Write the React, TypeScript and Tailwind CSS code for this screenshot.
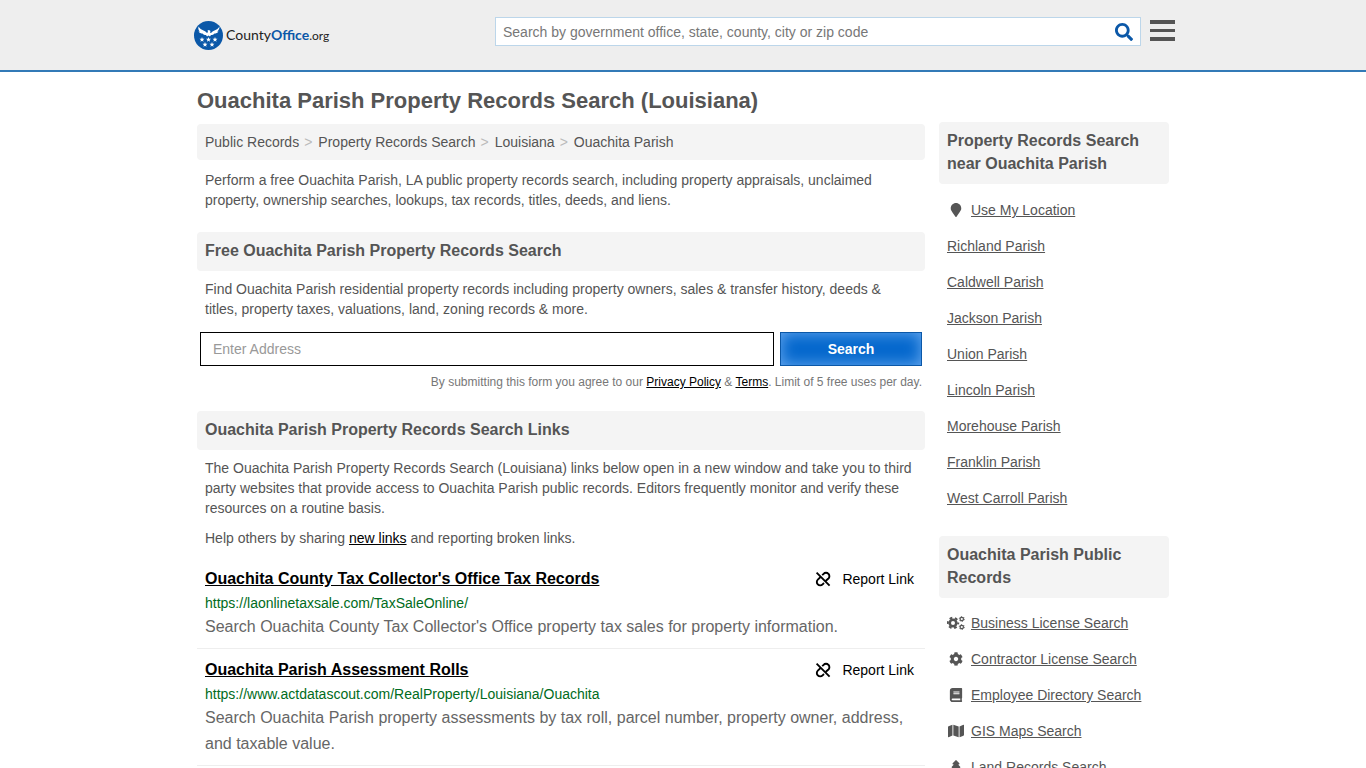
import type { ReactNode } from "react";
import { FaBook, FaCog, FaMap, FaMapMarker, FaSearch, FaTree } from "react-icons/fa";

const nearbyParishes = [
  "Richland Parish",
  "Caldwell Parish",
  "Jackson Parish",
  "Union Parish",
  "Lincoln Parish",
  "Morehouse Parish",
  "Franklin Parish",
  "West Carroll Parish",
];

const publicRecords = [
  { label: "Business License Search", icon: <CogsIcon /> },
  { label: "Contractor License Search", icon: <FaCog size={14} /> },
  { label: "Employee Directory Search", icon: <FaBook size={14} /> },
  { label: "GIS Maps Search", icon: <FaMap size={16} /> },
  { label: "Land Records Search", icon: <FaTree size={14} /> },
];

const recordLinks = [
  {
    title: "Ouachita County Tax Collector's Office Tax Records",
    url: "https://laonlinetaxsale.com/TaxSaleOnline/",
    description:
      "Search Ouachita County Tax Collector's Office property tax sales for property information.",
  },
  {
    title: "Ouachita Parish Assessment Rolls",
    url: "https://www.actdatascout.com/RealProperty/Louisiana/Ouachita",
    description:
      "Search Ouachita Parish property assessments by tax roll, parcel number, property owner, address, and taxable value.",
  },
];

const star = "M0-5 1.3-1.6 5-1.5 2.1 .8 3.1 4.3 0 2.3-3.1 4.3-2.1 .8-5-1.5-1.3-1.6Z";

function CogsIcon() {
  return (
    <svg width="18" height="14" viewBox="0 0 18 14" fill="none" stroke="currentColor" aria-hidden="true">
      <circle cx="6" cy="7" r="3.3" strokeWidth="2.6" />
      <circle cx="6" cy="7" r="5.2" strokeWidth="2" strokeDasharray="2.7 2.745" strokeDashoffset="1.35" />
      <circle cx="14.8" cy="3" r="1.7" strokeWidth="1.2" />
      <circle cx="14.8" cy="3" r="2.5" strokeWidth="0.9" strokeDasharray="1.3 1.318" />
      <circle cx="14.8" cy="11" r="1.7" strokeWidth="1.2" />
      <circle cx="14.8" cy="11" r="2.5" strokeWidth="0.9" strokeDasharray="1.3 1.318" />
    </svg>
  );
}

function UnlinkIcon() {
  return (
    <svg
      width="16"
      height="16"
      viewBox="0 0 16 16"
      fill="none"
      stroke="currentColor"
      strokeWidth="1.9"
      aria-hidden="true"
    >
      <path d="M1.6 1.6 14.6 14.6" />
      <path d="M7.2 4.2 8.6 2.8a3.2 3.2 0 0 1 4.8 0 3.3 3.3 0 0 1 0 4.7L10.6 10" />
      <path d="M9 12 7.6 13.3a3.3 3.3 0 0 1-4.8 0 3.3 3.3 0 0 1 0-4.7L5.6 6" />
    </svg>
  );
}

function Logo() {
  return (
    <a href="#" className="flex items-center gap-[3px]" aria-label="CountyOffice.org">
      <svg width="29" height="29" viewBox="0 0 58 58" aria-hidden="true">
        <circle cx="29" cy="29" r="29" fill="#0b58a8" />
        <g fill="#fff">
          <path d="M9 11c2 4 6 6 10 8 3 1 5 3 7 5l2-2-1-3 3-1 3 2-1 3 2 1c2-2 4-4 7-5 4-2 8-4 10-8 0 5-2 8-5 10h3c-2 3-5 4-8 4-2 2-4 3-7 3l-2 3-3-2-3 2-2-3c-3 0-5-1-7-3-3 0-6-1-8-4h3c-3-2-4-5-3-10Z" />
          <path d={star} transform="translate(16 37)" />
          <path d={star} transform="translate(29 37)" />
          <path d={star} transform="translate(42 37)" />
          <path d={star} transform="translate(22 47)" />
          <path d={star} transform="translate(36 47)" />
        </g>
      </svg>
      <span className="font-[Lato] text-[14px] leading-5 text-[#222]">
        County<b className="text-[#0b58a8]">Office</b>
        <span className="text-xs">.org</span>
      </span>
    </a>
  );
}

function SectionHeading({ children }: { children: ReactNode }) {
  return (
    <h2 className="rounded bg-[#f4f4f4] px-2 pt-[7px] pb-[9px] text-base leading-[23px] font-bold">
      {children}
    </h2>
  );
}

function Crumb({ children }: { children: ReactNode }) {
  return (
    <li className="flex gap-[5px] not-last:after:text-[#bbb] not-last:after:content-['>']">
      <a href="#">{children}</a>
    </li>
  );
}

export default function App() {
  return (
    <div className="bg-white font-['Liberation_Sans',Arial,sans-serif] text-sm leading-5 text-[#555]">
      <header className="border-b-2 border-[#337ab7] bg-[#eee]">
        <div className="mx-auto flex h-[70px] max-w-[978px] items-center justify-between">
          <Logo />
          <div className="mb-2 flex items-center gap-[9px]">
            <form className="flex h-[29px] w-[646px] items-center border border-[#bcd6ea] bg-white pt-px pr-[7px]">
              <input
                type="text"
                aria-label="Search"
                placeholder="Search by government office, state, county, city or zip code"
                className="flex-1 px-[7px] pt-px outline-none placeholder:text-[#777]"
              />
              <button type="button" aria-label="Submit search" className="text-[#0b58a8]">
                <FaSearch size={18} />
              </button>
            </form>
            <button type="button" aria-label="Menu" className="-mr-[3px] flex flex-col gap-[5px] pb-px">
              <span className="h-1 w-[25px] bg-[#555]" />
              <span className="h-[3px] w-[25px] bg-[#555]" />
              <span className="h-1 w-[25px] bg-[#555]" />
            </button>
          </div>
        </div>
      </header>

      <div className="mx-auto flex max-w-[972px] gap-[14px]">
        <main className="min-w-0 flex-1">
          <h1 className="pt-[15px] pb-[9px] text-[22px] leading-7 font-bold">
            Ouachita Parish Property Records Search (Louisiana)
          </h1>
          <nav aria-label="Breadcrumb" className="rounded bg-[#f4f4f4] p-2">
            <ol className="flex gap-[6px]">
              <Crumb>Public Records</Crumb>
              <Crumb>Property Records Search</Crumb>
              <Crumb>Louisiana</Crumb>
              <Crumb>Ouachita Parish</Crumb>
            </ol>
          </nav>
          <p className="px-2 pt-[10px] pb-[22px]">
            Perform a free Ouachita Parish, LA public property records search, including property
            appraisals, unclaimed property, ownership searches, lookups, tax records, titles, deeds,
            and liens.
          </p>

          <SectionHeading>Free Ouachita Parish Property Records Search</SectionHeading>
          <p className="px-2 pt-2 pb-[13px]">
            Find Ouachita Parish residential property records including property owners, sales &amp;
            transfer history, deeds &amp; titles, property taxes, valuations, land, zoning records
            &amp; more.
          </p>
          <form className="flex gap-[6px] px-[3px]">
            <input
              type="text"
              aria-label="Enter Address"
              placeholder="Enter Address"
              className="h-[34px] min-w-0 flex-1 border border-black px-3 placeholder:text-[#999]"
            />
            <button
              type="button"
              className="h-[34px] w-[142px] border border-[#0b58a8] bg-[#0568cd] font-bold text-white shadow-[inset_0_0_15px_#6aaaf0]"
            >
              Search
            </button>
          </form>
          <p className="px-[3px] pt-[6px] pb-[19px] text-right text-xs leading-5 text-[#777]">
            By submitting this form you agree to our{" "}
            <a href="#" className="text-black underline">Privacy Policy</a> &amp;{" "}
            <a href="#" className="text-black underline">Terms</a>. Limit of 5 free uses per day.
          </p>

          <SectionHeading>Ouachita Parish Property Records Search Links</SectionHeading>
          <p className="px-2 pt-2 pb-[10px]">
            The Ouachita Parish Property Records Search (Louisiana) links below open in a new window
            and take you to third party websites that provide access to Ouachita Parish public
            records. Editors frequently monitor and verify these resources on a routine basis.
          </p>
          <p className="px-2 pb-[10px]">
            Help others by sharing{" "}
            <a href="#" className="text-black underline">new links</a> and reporting broken links.
          </p>
          <ul>
            {recordLinks.map((link) => (
              <li key={link.title} className="border-b border-[#eee] px-2 pt-[9px] pb-2">
                <div className="flex items-center justify-between pb-[2px] text-black">
                  <h3 className="text-base leading-6 font-bold">
                    <a href="#" className="underline">{link.title}</a>
                  </h3>
                  <a href="#" className="mr-[3px] flex items-center gap-[11px]">
                    <UnlinkIcon />
                    Report Link
                  </a>
                </div>
                <div className="pb-px text-[#006b21]">{link.url}</div>
                <p className="text-base leading-[26px] text-[#666]">{link.description}</p>
              </li>
            ))}
          </ul>
        </main>

        <aside className="w-[230px] shrink-0 pt-[50px]">
          <SectionHeading>Property Records Search near Ouachita Parish</SectionHeading>
          <ul className="px-2 pt-2 pb-5 leading-9">
            <li className="flex items-center gap-[6px]">
              <span className="flex w-[18px] justify-center"><FaMapMarker size={14} /></span>
              <a href="#" className="underline">Use My Location</a>
            </li>
            {nearbyParishes.map((name) => (
              <li key={name}>
                <a href="#" className="underline">{name}</a>
              </li>
            ))}
          </ul>
          <SectionHeading>Ouachita Parish Public Records</SectionHeading>
          <ul className="px-2 pt-[7px] leading-9">
            {publicRecords.map(({ label, icon }) => (
              <li key={label} className="flex items-center gap-[6px]">
                <span className="flex w-[18px] justify-center">{icon}</span>
                <a href="#" className="underline">{label}</a>
              </li>
            ))}
          </ul>
        </aside>
      </div>
    </div>
  );
}
